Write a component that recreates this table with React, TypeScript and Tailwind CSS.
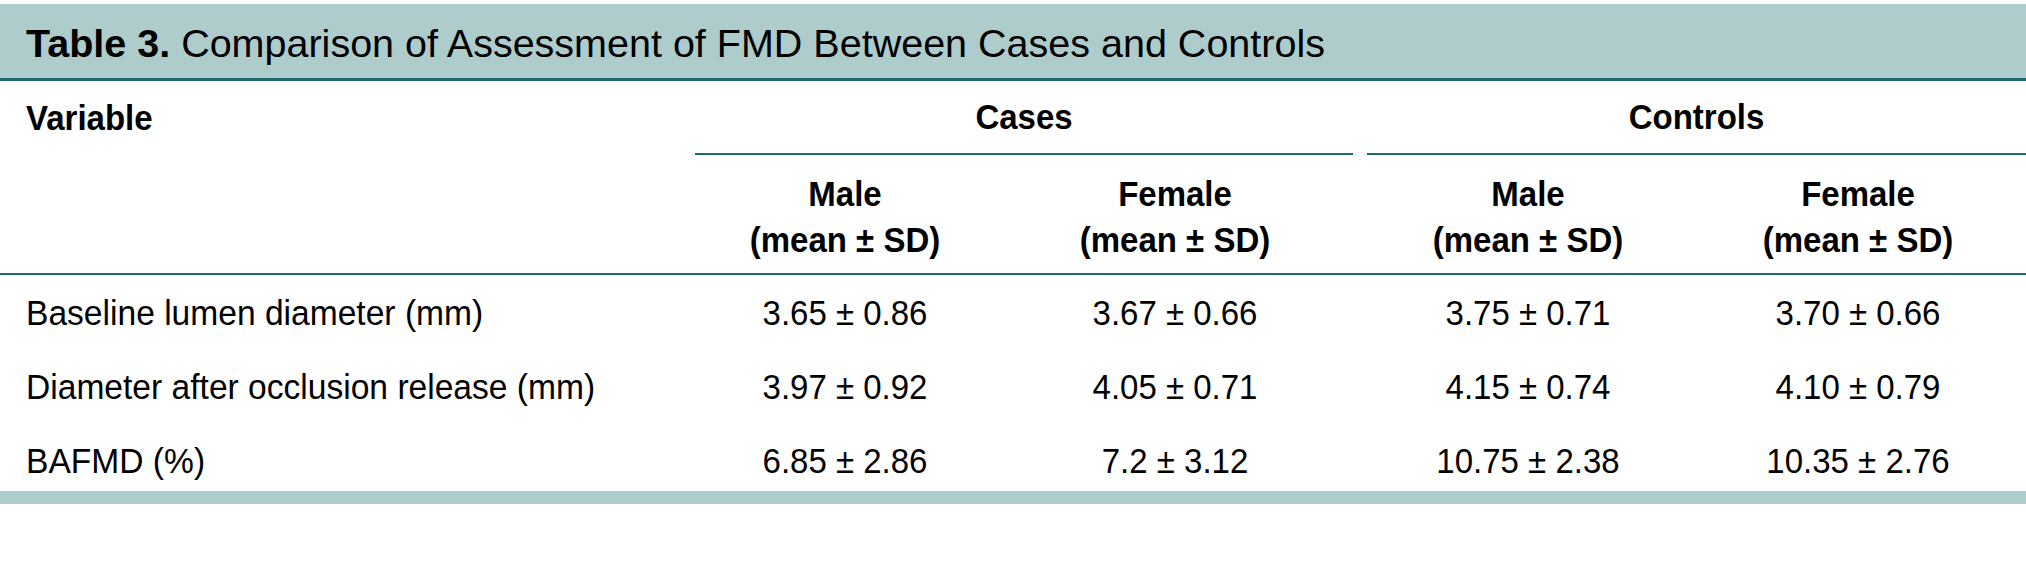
const rows = [
  { label: 'Baseline lumen diameter (mm)', values: ['3.65 ± 0.86', '3.67 ± 0.66', '3.75 ± 0.71', '3.70 ± 0.66'] },
  { label: 'Diameter after occlusion release (mm)', values: ['3.97 ± 0.92', '4.05 ± 0.71', '4.15 ± 0.74', '4.10 ± 0.79'] },
  { label: 'BAFMD (%)', values: ['6.85 ± 2.86', '7.2 ± 3.12', '10.75 ± 2.38', '10.35 ± 2.76'] },
];

// el texto del original sale un poco mas alto que Arial normal
const Txt = ({ children }: { children: React.ReactNode }) => (
  <span className="inline-block scale-y-[1.07]">{children}</span>
);

const SubHead = ({ sex }: { sex: string }) => (
  <div className="flex flex-col items-center font-bold leading-[46px]">
    <Txt>{sex}</Txt>
    <Txt>(mean ± SD)</Txt>
  </div>
);

export default function App() {
  return (
    <div className="w-[2026px] h-[564px] bg-white pt-[4px] text-black font-['Liberation_Sans',Arial,sans-serif]">
      {/* Titulo de la tabla */}
      <div className="h-[77px] pt-[5px] bg-[#aecccc] border-b-[3px] border-[#1b6a6c] flex items-center pl-[26px] text-[39.5px]">
        <span className="font-bold">Table 3.</span>
        <span>&nbsp;Comparison of Assessment of FMD Between Cases and Controls</span>
      </div>

      <div className="text-[33px]">
        {/* Cabecera de grupos */}
        <div className="flex h-[74px]">
          <div className="w-[695px] pl-[26px] flex items-center font-bold"><Txt>Variable</Txt></div>
          <div className="w-[658px] border-b-2 border-[#1b6a6c] flex items-center justify-center font-bold"><Txt>Cases</Txt></div>
          <div className="w-[14px]" />
          <div className="w-[659px] border-b-2 border-[#1b6a6c] flex items-center justify-center font-bold"><Txt>Controls</Txt></div>
        </div>

        {/* Cabecera Male / Female */}
        <div className="grid grid-cols-[680px_330px_330px_23px_330px_330px] h-[120px] pt-[6px] items-center border-b-2 border-[#1b6a6c]">
          <div />
          <SubHead sex="Male" />
          <SubHead sex="Female" />
          <div />
          <SubHead sex="Male" />
          <SubHead sex="Female" />
        </div>

        {/* Filas de datos */}
        {rows.map((row, i) => (
          <div
            key={row.label}
            className={`grid grid-cols-[680px_330px_330px_23px_330px_330px] items-center ${i === 2 ? 'h-[68px] pt-[8px]' : 'h-[74px] pt-[2px]'}`}
          >
            <div className="pl-[26px] text-[33.6px]"><Txt>{row.label}</Txt></div>
            <div className="text-center"><Txt>{row.values[0]}</Txt></div>
            <div className="text-center"><Txt>{row.values[1]}</Txt></div>
            <div />
            <div className="text-center"><Txt>{row.values[2]}</Txt></div>
            <div className="text-center"><Txt>{row.values[3]}</Txt></div>
          </div>
        ))}
      </div>

      {/* Barra inferior */}
      <div className="h-[13px] bg-[#aecccc]" />
    </div>
  );
}
